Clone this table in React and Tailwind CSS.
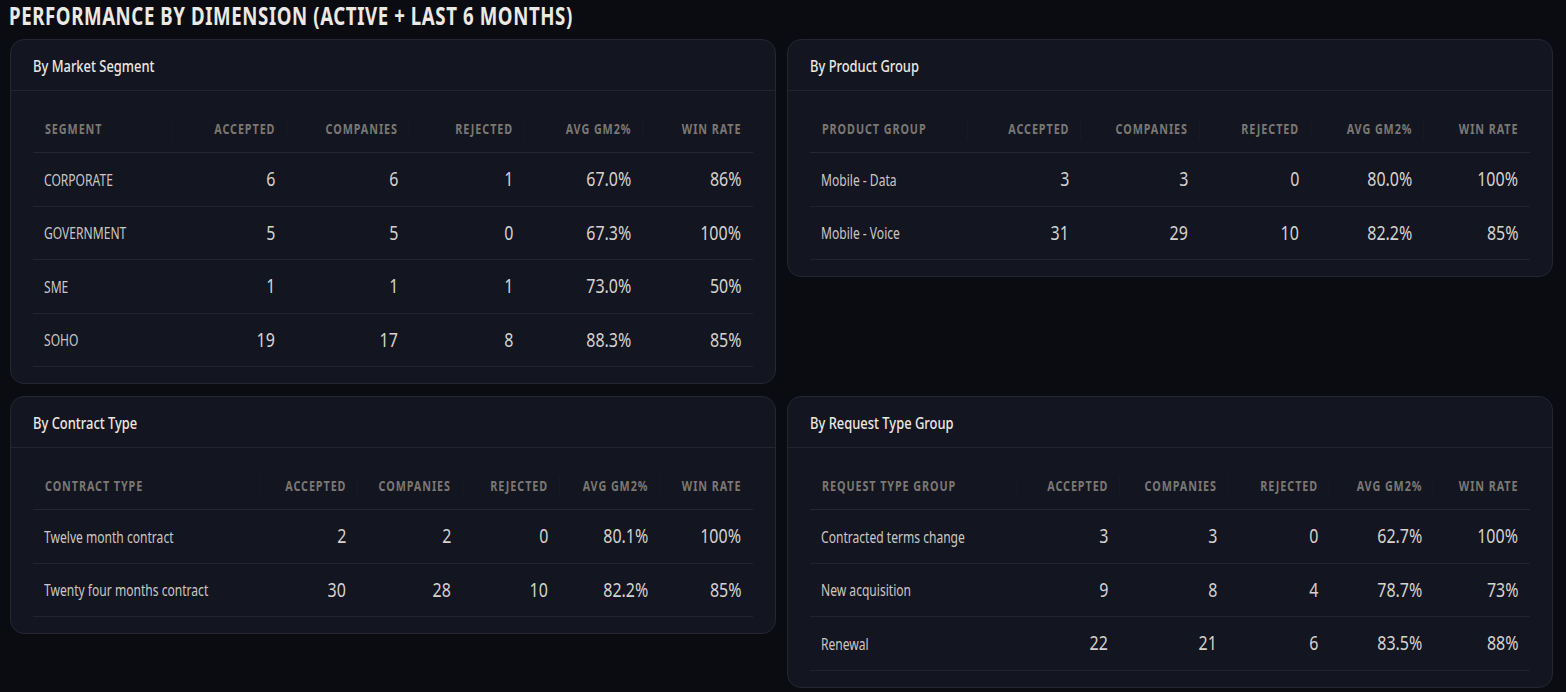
import React from 'react';

// column widths per table (px) come from the layout of each card
const tables = [
  {
    title: 'By Market Segment',
    first: 'Segment',
    cols: 'grid-cols-[139px_115px_123px_115px_118px_110px]',
    rows: [
      ['CORPORATE', '6', '6', '1', '67.0%', '86%'],
      ['GOVERNMENT', '5', '5', '0', '67.3%', '100%'],
      ['SME', '1', '1', '1', '73.0%', '50%'],
      ['SOHO', '19', '17', '8', '88.3%', '85%'],
    ],
  },
  {
    title: 'By Product Group',
    first: 'Product Group',
    cols: 'grid-cols-[158px_113px_119px_111px_113px_106px]',
    rows: [
      ['Mobile - Data', '3', '3', '0', '80.0%', '100%'],
      ['Mobile - Voice', '31', '29', '10', '82.2%', '85%'],
    ],
  },
  {
    title: 'By Contract Type',
    first: 'Contract Type',
    cols: 'grid-cols-[227px_98px_105px_97px_100px_93px]',
    rows: [
      ['Twelve month contract', '2', '2', '0', '80.1%', '100%'],
      ['Twenty four months contract', '30', '28', '10', '82.2%', '85%'],
    ],
  },
  {
    title: 'By Request Type Group',
    first: 'Request Type Group',
    cols: 'grid-cols-[208px_102px_109px_101px_104px_96px]',
    rows: [
      ['Contracted terms change', '3', '3', '0', '62.7%', '100%'],
      ['New acquisition', '9', '8', '4', '78.7%', '73%'],
      ['Renewal', '22', '21', '6', '83.5%', '88%'],
    ],
  },
];

const headers = ['Accepted', 'Companies', 'Rejected', 'Avg GM2%', 'Win Rate'];

// no condensed face is installed, so text is squeezed horizontally
const DimensionCard = ({ t }) => (
  <div className="bg-[#131520] border border-[#242733] rounded-[14px]">
    <div className="h-[51px] px-[22px] pt-px flex items-center border-b border-[#222531] text-[17px] font-medium text-[#ebe8e3]">
      <span className="inline-block origin-left scale-x-[0.76] whitespace-nowrap">{t.title}</span>
    </div>
    <div className="px-[22px] pt-[15px] pb-4">
      {/* header row */}
      <div className={`grid ${t.cols} h-[47px] border-b border-[#242733] items-center text-[14px] font-bold uppercase tracking-[1.2px] text-[#7b7873] whitespace-nowrap`}>
        {[t.first, ...headers].map((h, i) => (
          <div key={h} className={`relative px-3 h-full flex items-center ${i === 0 ? 'justify-start' : 'justify-end'}`}>
            <span className={`inline-block -mt-px scale-x-[0.77] ${i === 0 ? 'origin-left' : 'origin-right'}`}>{h}</span>
            {i < 5 && <span className="absolute right-0 top-[13px] h-[21px] w-px bg-[#171a25]" />}
          </div>
        ))}
      </div>
      {t.rows.map((r) => (
        <div key={r[0]} className={`grid ${t.cols} h-[53.5px] border-b border-[#212430] items-center whitespace-nowrap`}>
          <div className="px-3 text-[17px] text-[#cbc8c2]">
            <span className="inline-block -ml-px origin-left scale-x-[0.71]">{r[0]}</span>
          </div>
          {r.slice(1).map((v, i) => (
            <div key={i} className="px-3 text-right text-[20px] text-[#d6d3ce]">
              <span className="inline-block origin-right scale-x-[0.8]">{v}</span>
            </div>
          ))}
        </div>
      ))}
    </div>
  </div>
);

export default function App() {
  return (
    <div className="min-h-[692px] bg-[#0a0c12] pl-[10px] pr-[13px] font-['Noto_Sans',sans-serif]">
      <h1 className="h-[39px] -ml-px text-[25px] leading-[30px] font-bold uppercase tracking-[0.8px] text-[#ece9e4] whitespace-nowrap">
        <span className="inline-block origin-left scale-x-[0.745]">Performance by Dimension (Active + Last 6 Months)</span>
      </h1>
      <div className="grid grid-cols-2 gap-x-[11px] gap-y-3 items-start">
        <DimensionCard t={tables[0]} />
        <DimensionCard t={tables[1]} />
        <DimensionCard t={tables[2]} />
        <DimensionCard t={tables[3]} />
      </div>
    </div>
  );
}
